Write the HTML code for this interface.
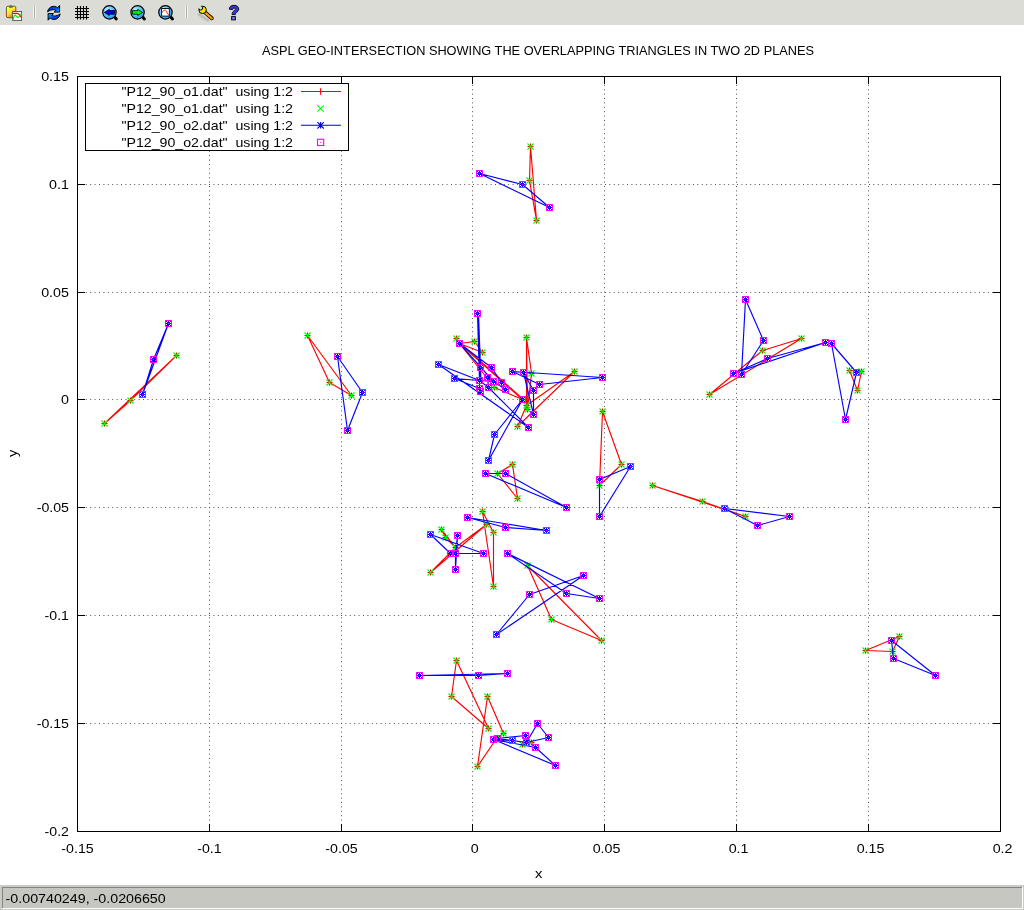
<!DOCTYPE html>
<html><head><meta charset="utf-8">
<style>
html,body{margin:0;padding:0;background:#fff;width:1024px;height:910px;overflow:hidden}
svg{display:block;position:absolute;left:0;top:0;will-change:transform}
text{font-family:"Liberation Sans",sans-serif;fill:#000}
</style></head><body>
<svg width="1024" height="910" viewBox="0 0 1024 910">
<defs>
<linearGradient id="clip" x1="0.2" y1="0.1" x2="0.8" y2="1"><stop offset="0" stop-color="#ffff50"/><stop offset="0.45" stop-color="#ffe030"/><stop offset="1" stop-color="#e85a00"/></linearGradient>
<radialGradient id="lens" cx="0.35" cy="0.3" r="0.8"><stop offset="0" stop-color="#b8ecff"/><stop offset="0.55" stop-color="#55bfff"/><stop offset="1" stop-color="#0a90f0"/></radialGradient>
<linearGradient id="ref" x1="0" y1="0" x2="1" y2="1"><stop offset="0" stop-color="#0020c0"/><stop offset="0.6" stop-color="#0050ff"/><stop offset="1" stop-color="#00b8ff"/></linearGradient>
<linearGradient id="ref2" x1="0" y1="0" x2="1" y2="1"><stop offset="0" stop-color="#00c8ff"/><stop offset="0.5" stop-color="#0050ff"/><stop offset="1" stop-color="#0020c0"/></linearGradient>
</defs>
<!-- toolbar -->
<rect x="0" y="0" width="1024" height="25" fill="#dcdcd6"/>
<!-- copy icon -->
<rect x="6.4" y="6.2" width="9.4" height="11.5" rx="1.6" fill="url(#clip)" stroke="#6a4a10" stroke-width="0.9"/>
<path d="M9.3 7.2 C9.3 5.2 12.3 5.2 12.3 7.2 Z" fill="#666" stroke="#444" stroke-width="0.6"/>
<rect x="9.3" y="6.6" width="3" height="1.2" fill="#777"/>
<rect x="12.6" y="11.5" width="9" height="8.9" fill="#fff" stroke="#505050" stroke-width="0.9"/>
<path d="M12.9 13.3 H17.3 C19 13.3 20 15.5 21.4 17.4" stroke="#f00" stroke-width="1.2" fill="none"/>
<path d="M12.9 20.2 C13.6 17 14 15.2 15 15.2 C16.2 15.2 16.5 17.4 17.8 17.4 C19.3 17.4 20.2 15 21.4 14.2" stroke="#0e0" stroke-width="1.2" fill="none"/>
<!-- separators -->
<linearGradient id="sepg" x1="0" y1="0" x2="0" y2="1"><stop offset="0" stop-color="#fff" stop-opacity="0"/><stop offset="0.25" stop-color="#fff" stop-opacity="1"/><stop offset="0.75" stop-color="#fff" stop-opacity="1"/><stop offset="1" stop-color="#fff" stop-opacity="0"/></linearGradient>
<mask id="sepm"><rect x="0" y="5" width="1024" height="14.5" fill="url(#sepg)"/></mask>
<g mask="url(#sepm)">
<rect x="33" y="5" width="1" height="14.5" fill="#f6f6f3"/><rect x="34" y="5" width="1" height="14.5" fill="#a9a9a4"/><rect x="35" y="5" width="1" height="14.5" fill="#f6f6f3"/>
<rect x="185" y="5" width="1" height="14.5" fill="#f6f6f3"/><rect x="186" y="5" width="1" height="14.5" fill="#a9a9a4"/><rect x="187" y="5" width="1" height="14.5" fill="#f6f6f3"/>
</g>
<!-- refresh -->
<path d="M47.5 11.8 C48.3 8.2 50.8 6.3 53.6 6.3 C55.3 6.3 56.6 6.9 57.5 7.8 L59.6 5.5 L59.6 12.1 L54.2 12.1 L55.9 10.3 C55.2 9.9 54.4 9.7 53.4 9.7 C51.2 9.7 49.5 10.5 47.5 11.8 Z" fill="url(#ref)" stroke="#000" stroke-width="1" stroke-linejoin="round"/>
<path d="M60.2 13.9 C59.4 17.5 56.9 19.4 54.1 19.4 C52.4 19.4 51.1 18.8 50.2 17.9 L48.1 20.2 L48.1 13.6 L53.5 13.6 L51.8 15.4 C52.5 15.8 53.3 16 54.3 16 C56.5 16 58.2 15.2 60.2 13.9 Z" fill="url(#ref2)" stroke="#000" stroke-width="1" stroke-linejoin="round"/>
<!-- grid icon -->
<path d="M77.5 6 V19.5 M80.5 6 V19.5 M83.5 6 V19.5 M86.5 6 V19.5 M75 8.5 H89 M75 11.5 H89 M75 14.5 H89 M75 17.5 H89" stroke="#000" stroke-width="1.1"/>
<!-- zoom prev -->
<path d="M114.8 17.3 L116.3 19" stroke="#000" stroke-width="3" stroke-linecap="round"/>
<circle cx="109.45" cy="12.35" r="6.7" fill="url(#lens)" stroke="#000" stroke-width="1.2"/>
<path d="M104.3 12.4 L109.3 9.3 V10.6 H114.6 V14.2 H109.3 V15.5 Z" fill="#0000f0" stroke="#000" stroke-width="0.8" stroke-linejoin="round"/>
<!-- zoom next -->
<path d="M142.9 17.3 L144.4 19" stroke="#000" stroke-width="3" stroke-linecap="round"/>
<circle cx="137.55" cy="12.35" r="6.7" fill="url(#lens)" stroke="#000" stroke-width="1.2"/>
<path d="M142.7 12.4 L137.7 9.3 V10.6 H132.4 V14.2 H137.7 V15.5 Z" fill="#00f000" stroke="#000" stroke-width="0.8" stroke-linejoin="round"/>
<!-- unzoom -->
<path d="M171 17.3 L172.5 19" stroke="#000" stroke-width="3" stroke-linecap="round"/>
<circle cx="165.45" cy="12.35" r="6.7" fill="url(#lens)" stroke="#000" stroke-width="1.2"/>
<rect x="161.6" y="8.5" width="7.7" height="7.6" fill="#fff" stroke="#000" stroke-width="0.9"/>
<path d="M162.1 12.6 C163 11.5 163.3 10 164.8 10 C166.2 10 166.6 11 167.2 13 C167.7 14.5 168.3 14.8 169 14.9" stroke="#f00" stroke-width="0.9" fill="none"/>
<!-- wrench -->
<path d="M199 14.5 L207.8 20.3" stroke="#9a9284" stroke-width="3" stroke-linecap="round" opacity="0.4"/>
<path d="M204.3 11.8 L211.8 18.3" stroke="#000" stroke-width="3.8" stroke-linecap="round"/>
<path d="M204.3 11.8 L211.8 18.3" stroke="#ff9a00" stroke-width="2.2" stroke-linecap="round"/>
<clipPath id="whc"><circle cx="202.6" cy="9.9" r="4.3"/></clipPath>
<circle cx="202.6" cy="9.9" r="3.7" fill="#f6e400" stroke="#000" stroke-width="1"/>
<circle cx="200.6" cy="7.9" r="2.1" fill="#dcdcd6" stroke="#000" stroke-width="1" clip-path="url(#whc)"/>
<path d="M200 8.5 L198 6.5 L201.2 5" fill="#dcdcd6" stroke="none"/>
<!-- help -->
<path d="M229.3 9.2 C229.3 6.6 231.3 5.3 234 5.3 C236.8 5.3 238.7 6.7 238.7 9.1 C238.7 11.1 237.3 11.9 236.2 12.6 C235.5 13.1 235.4 13.5 235.4 14.6 L232.1 14.6 C232.1 12.8 232.5 11.9 233.8 11 C234.8 10.3 235.3 9.9 235.3 9.2 C235.3 8.5 234.8 8.1 234.1 8.1 C233.2 8.1 232.7 8.6 232.7 9.6 Z" fill="#3535e8" stroke="#000" stroke-width="0.9" stroke-linejoin="round"/>
<rect x="231.6" y="16.6" width="3.8" height="3.3" fill="#6a6aec" stroke="#000" stroke-width="0.9"/>

<!-- status bar -->
<rect x="0" y="885" width="1024" height="25" fill="#c9cbc4"/>
<rect x="2" y="887" width="1021" height="22" fill="#c5c7c0"/>
<rect x="2" y="887" width="1020" height="1" fill="#83857f"/>
<rect x="2" y="887" width="1" height="21" fill="#83857f"/>
<rect x="2" y="908" width="1021" height="1" fill="#fdfdfc"/>
<rect x="1022" y="887" width="1" height="22" fill="#fdfdfc"/>

<!-- title -->
<text x="262" y="54.8" font-size="12.4" textLength="552" lengthAdjust="spacingAndGlyphs">ASPL GEO-INTERSECTION SHOWING THE OVERLAPPING TRIANGLES IN TWO 2D PLANES</text>

<path d="M209.5 76 V831 M341.5 76 V831 M472.5 76 V831 M604.5 76 V831 M736.5 76 V831 M868.5 76 V831 M77 184.5 H1000 M77 292.5 H1000 M77 399.5 H1000 M77 507.5 H1000 M77 615.5 H1000 M77 723.5 H1000" stroke="#555" stroke-width="1" stroke-dasharray="1 3.4" fill="none"/>
<rect x="77.5" y="76.5" width="923" height="755" fill="none" stroke="#000" stroke-width="1"/>
<path d="M209.5 832 V824 M209.5 76 V84 M341.5 832 V824 M341.5 76 V84 M472.5 832 V824 M472.5 76 V84 M604.5 832 V824 M604.5 76 V84 M736.5 832 V824 M736.5 76 V84 M868.5 832 V824 M868.5 76 V84 M77 184.5 H85 M1001 184.5 H993 M77 292.5 H85 M1001 292.5 H993 M77 399.5 H85 M1001 399.5 H993 M77 507.5 H85 M1001 507.5 H993 M77 615.5 H85 M1001 615.5 H993 M77 723.5 H85 M1001 723.5 H993" stroke="#000" stroke-width="1" fill="none"/>
<path d="M104.5 423.5 L130.5 400.5 L176.5 355.5 L104.5 423.5 M307.5 335.5 L329.5 382.5 L351.5 395.5 L307.5 335.5 M530.5 146.5 L529.5 180.5 L536.5 220.5 L530.5 146.5 M497.5 473.5 L512.5 464.5 L517.5 498.5 L497.5 473.5 M602.5 411.5 L621.5 464.5 L599.5 485.5 L602.5 411.5 M652.5 485.5 L702.5 501.5 L745.5 516.5 L652.5 485.5 M709.5 394.5 L762.5 350.5 L801.5 338.5 L709.5 394.5 M849.5 370.5 L857.5 390.5 L861.5 371.5 L849.5 370.5 M527.5 565.5 L551.5 619.5 L601.5 640.5 L527.5 565.5 M482.5 511.5 L493.5 532.5 L493.5 586.5 L482.5 511.5 M430.5 572.5 L455.5 547.5 L486.5 524.5 L430.5 572.5 M441.5 529.5 L445.5 537.5 L455.5 547.5 L441.5 529.5 M456.5 660.5 L451.5 696.5 L488.5 728.5 L456.5 660.5 M487.5 696.5 L503.5 733.5 L496.5 738.5 L477.5 766.5 L487.5 696.5 M522.5 744.5 L531.5 742.5 L522.5 744.5 M865.5 650.5 L899.5 636.5 L892.5 651.5 L865.5 650.5 M459.5 343.5 L474.5 341.5 L482.5 352.5 L459.5 343.5 M459.5 343.5 L494.5 387.5 L522.5 399.5 L459.5 343.5 M526.5 337.5 L531.5 373.5 L527.5 409.5 L526.5 337.5 M526.5 337.5 L526.5 405.5 M574.5 371.5 L517.5 426.5 L526.5 405.5 L574.5 371.5 M460.5 343.4 L523.4 399.4" stroke="#f00" stroke-width="1.15" fill="none" stroke-linejoin="round"/>
<path d="M101.5 423.5 h6.0 M104.5 420.5 v6.0 M127.5 400.5 h6.0 M130.5 397.5 v6.0 M173.5 355.5 h6.0 M176.5 352.5 v6.0 M304.5 335.5 h6.0 M307.5 332.5 v6.0 M326.5 382.5 h6.0 M329.5 379.5 v6.0 M348.5 395.5 h6.0 M351.5 392.5 v6.0 M527.5 146.5 h6.0 M530.5 143.5 v6.0 M526.5 180.5 h6.0 M529.5 177.5 v6.0 M533.5 220.5 h6.0 M536.5 217.5 v6.0 M494.5 473.5 h6.0 M497.5 470.5 v6.0 M509.5 464.5 h6.0 M512.5 461.5 v6.0 M514.5 498.5 h6.0 M517.5 495.5 v6.0 M599.5 411.5 h6.0 M602.5 408.5 v6.0 M618.5 464.5 h6.0 M621.5 461.5 v6.0 M596.5 485.5 h6.0 M599.5 482.5 v6.0 M649.5 485.5 h6.0 M652.5 482.5 v6.0 M699.5 501.5 h6.0 M702.5 498.5 v6.0 M742.5 516.5 h6.0 M745.5 513.5 v6.0 M706.5 394.5 h6.0 M709.5 391.5 v6.0 M759.5 350.5 h6.0 M762.5 347.5 v6.0 M798.5 338.5 h6.0 M801.5 335.5 v6.0 M846.5 370.5 h6.0 M849.5 367.5 v6.0 M854.5 390.5 h6.0 M857.5 387.5 v6.0 M858.5 371.5 h6.0 M861.5 368.5 v6.0 M524.5 565.5 h6.0 M527.5 562.5 v6.0 M548.5 619.5 h6.0 M551.5 616.5 v6.0 M598.5 640.5 h6.0 M601.5 637.5 v6.0 M479.5 511.5 h6.0 M482.5 508.5 v6.0 M490.5 532.5 h6.0 M493.5 529.5 v6.0 M490.5 586.5 h6.0 M493.5 583.5 v6.0 M427.5 572.5 h6.0 M430.5 569.5 v6.0 M452.5 547.5 h6.0 M455.5 544.5 v6.0 M483.5 524.5 h6.0 M486.5 521.5 v6.0 M438.5 529.5 h6.0 M441.5 526.5 v6.0 M442.5 537.5 h6.0 M445.5 534.5 v6.0 M453.5 660.5 h6.0 M456.5 657.5 v6.0 M448.5 696.5 h6.0 M451.5 693.5 v6.0 M485.5 728.5 h6.0 M488.5 725.5 v6.0 M484.5 696.5 h6.0 M487.5 693.5 v6.0 M500.5 733.5 h6.0 M503.5 730.5 v6.0 M493.5 738.5 h6.0 M496.5 735.5 v6.0 M474.5 766.5 h6.0 M477.5 763.5 v6.0 M519.5 744.5 h6.0 M522.5 741.5 v6.0 M528.5 742.5 h6.0 M531.5 739.5 v6.0 M862.5 650.5 h6.0 M865.5 647.5 v6.0 M896.5 636.5 h6.0 M899.5 633.5 v6.0 M889.5 651.5 h6.0 M892.5 648.5 v6.0 M456.5 343.5 h6.0 M459.5 340.5 v6.0 M471.5 341.5 h6.0 M474.5 338.5 v6.0 M479.5 352.5 h6.0 M482.5 349.5 v6.0 M491.5 387.5 h6.0 M494.5 384.5 v6.0 M519.5 399.5 h6.0 M522.5 396.5 v6.0 M523.5 337.5 h6.0 M526.5 334.5 v6.0 M528.5 373.5 h6.0 M531.5 370.5 v6.0 M524.5 409.5 h6.0 M527.5 406.5 v6.0 M523.5 405.5 h6.0 M526.5 402.5 v6.0 M571.5 371.5 h6.0 M574.5 368.5 v6.0 M514.5 426.5 h6.0 M517.5 423.5 v6.0 M453.5 338.5 h6.0 M456.5 335.5 v6.0" stroke="#f00" stroke-width="1.1" fill="none"/>
<path d="M101.5 420.5 l6.0 6.0 M101.5 426.5 l6.0 -6.0 M127.5 397.5 l6.0 6.0 M127.5 403.5 l6.0 -6.0 M173.5 352.5 l6.0 6.0 M173.5 358.5 l6.0 -6.0 M304.5 332.5 l6.0 6.0 M304.5 338.5 l6.0 -6.0 M326.5 379.5 l6.0 6.0 M326.5 385.5 l6.0 -6.0 M348.5 392.5 l6.0 6.0 M348.5 398.5 l6.0 -6.0 M527.5 143.5 l6.0 6.0 M527.5 149.5 l6.0 -6.0 M526.5 177.5 l6.0 6.0 M526.5 183.5 l6.0 -6.0 M533.5 217.5 l6.0 6.0 M533.5 223.5 l6.0 -6.0 M494.5 470.5 l6.0 6.0 M494.5 476.5 l6.0 -6.0 M509.5 461.5 l6.0 6.0 M509.5 467.5 l6.0 -6.0 M514.5 495.5 l6.0 6.0 M514.5 501.5 l6.0 -6.0 M599.5 408.5 l6.0 6.0 M599.5 414.5 l6.0 -6.0 M618.5 461.5 l6.0 6.0 M618.5 467.5 l6.0 -6.0 M596.5 482.5 l6.0 6.0 M596.5 488.5 l6.0 -6.0 M649.5 482.5 l6.0 6.0 M649.5 488.5 l6.0 -6.0 M699.5 498.5 l6.0 6.0 M699.5 504.5 l6.0 -6.0 M742.5 513.5 l6.0 6.0 M742.5 519.5 l6.0 -6.0 M706.5 391.5 l6.0 6.0 M706.5 397.5 l6.0 -6.0 M759.5 347.5 l6.0 6.0 M759.5 353.5 l6.0 -6.0 M798.5 335.5 l6.0 6.0 M798.5 341.5 l6.0 -6.0 M846.5 367.5 l6.0 6.0 M846.5 373.5 l6.0 -6.0 M854.5 387.5 l6.0 6.0 M854.5 393.5 l6.0 -6.0 M858.5 368.5 l6.0 6.0 M858.5 374.5 l6.0 -6.0 M524.5 562.5 l6.0 6.0 M524.5 568.5 l6.0 -6.0 M548.5 616.5 l6.0 6.0 M548.5 622.5 l6.0 -6.0 M598.5 637.5 l6.0 6.0 M598.5 643.5 l6.0 -6.0 M479.5 508.5 l6.0 6.0 M479.5 514.5 l6.0 -6.0 M490.5 529.5 l6.0 6.0 M490.5 535.5 l6.0 -6.0 M490.5 583.5 l6.0 6.0 M490.5 589.5 l6.0 -6.0 M427.5 569.5 l6.0 6.0 M427.5 575.5 l6.0 -6.0 M452.5 544.5 l6.0 6.0 M452.5 550.5 l6.0 -6.0 M483.5 521.5 l6.0 6.0 M483.5 527.5 l6.0 -6.0 M438.5 526.5 l6.0 6.0 M438.5 532.5 l6.0 -6.0 M442.5 534.5 l6.0 6.0 M442.5 540.5 l6.0 -6.0 M453.5 657.5 l6.0 6.0 M453.5 663.5 l6.0 -6.0 M448.5 693.5 l6.0 6.0 M448.5 699.5 l6.0 -6.0 M485.5 725.5 l6.0 6.0 M485.5 731.5 l6.0 -6.0 M484.5 693.5 l6.0 6.0 M484.5 699.5 l6.0 -6.0 M500.5 730.5 l6.0 6.0 M500.5 736.5 l6.0 -6.0 M493.5 735.5 l6.0 6.0 M493.5 741.5 l6.0 -6.0 M474.5 763.5 l6.0 6.0 M474.5 769.5 l6.0 -6.0 M519.5 741.5 l6.0 6.0 M519.5 747.5 l6.0 -6.0 M528.5 739.5 l6.0 6.0 M528.5 745.5 l6.0 -6.0 M862.5 647.5 l6.0 6.0 M862.5 653.5 l6.0 -6.0 M896.5 633.5 l6.0 6.0 M896.5 639.5 l6.0 -6.0 M889.5 648.5 l6.0 6.0 M889.5 654.5 l6.0 -6.0 M456.5 340.5 l6.0 6.0 M456.5 346.5 l6.0 -6.0 M471.5 338.5 l6.0 6.0 M471.5 344.5 l6.0 -6.0 M479.5 349.5 l6.0 6.0 M479.5 355.5 l6.0 -6.0 M491.5 384.5 l6.0 6.0 M491.5 390.5 l6.0 -6.0 M519.5 396.5 l6.0 6.0 M519.5 402.5 l6.0 -6.0 M523.5 334.5 l6.0 6.0 M523.5 340.5 l6.0 -6.0 M528.5 370.5 l6.0 6.0 M528.5 376.5 l6.0 -6.0 M524.5 406.5 l6.0 6.0 M524.5 412.5 l6.0 -6.0 M523.5 402.5 l6.0 6.0 M523.5 408.5 l6.0 -6.0 M571.5 368.5 l6.0 6.0 M571.5 374.5 l6.0 -6.0 M514.5 423.5 l6.0 6.0 M514.5 429.5 l6.0 -6.0 M453.5 335.5 l6.0 6.0 M453.5 341.5 l6.0 -6.0" stroke="#0f0" stroke-width="1.15" fill="none"/>
<path d="M168.5 323.5 L153.5 359.5 L142.5 394.5 L168.5 323.5 M337.5 356.5 L362.5 392.5 L347.5 430.5 L337.5 356.5 M479.5 173.5 L522.5 184.5 L549.5 207.5 L479.5 173.5 M522.5 399.5 L494.5 434.5 L488.5 460.5 L522.5 399.5 M485.5 473.5 L505.5 473.5 L566.5 507.5 L485.5 473.5 M599.5 479.5 L630.5 466.5 L599.5 516.5 L599.5 479.5 M724.5 508.5 L789.5 516.5 L757.5 525.5 L724.5 508.5 M745.5 299.5 L763.5 340.5 L741.5 374.5 L745.5 299.5 M733.5 373.5 L767.5 358.5 L825.5 342.5 L733.5 373.5 M831.5 343.5 L856.5 372.5 L845.5 419.5 L831.5 343.5 M507.5 553.5 L566.5 593.5 L599.5 598.5 L507.5 553.5 M529.5 594.5 L583.5 575.5 L496.5 634.5 L529.5 594.5 M467.5 517.5 L505.5 527.5 L546.5 530.5 L467.5 517.5 M430.5 534.5 L450.5 553.5 L483.5 553.5 L430.5 534.5 M457.5 535.5 L455.5 553.5 L455.5 569.5 L457.5 535.5 M419.5 675.5 L478.5 675.5 L507.5 673.5 L419.5 675.5 M537.5 723.5 L548.5 737.5 L526.5 742.5 L537.5 723.5 M497.5 738.5 L525.5 735.5 L526.5 742.5 L497.5 738.5 M493.5 739.5 L512.5 740.5 L526.5 742.5 M493.5 739.5 L535.5 747.5 L555.5 765.5 L493.5 739.5 M891.5 640.5 L893.5 658.5 L935.5 675.5 L891.5 640.5 M477.5 313.5 L480.5 367.5 L479.5 380.5 L477.5 313.5 M479.5 380.5 L479.5 388.5 L480.5 391.5 M459.5 343.5 L491.5 367.5 L501.5 382.5 M459.5 343.5 L493.5 381.5 M438.5 364.5 L479.5 380.5 M438.5 364.5 L528.5 427.5 M454.5 378.5 L479.5 380.5 M454.5 378.5 L479.5 388.5 M487.5 377.5 L488.5 387.5 L528.5 427.5 M479.5 380.5 L488.5 387.5 M479.5 380.5 L493.5 381.5 M493.5 381.5 L505.5 389.5 M487.5 377.5 L505.5 389.5 M512.5 371.5 L602.5 377.5 L539.5 384.5 L512.5 371.5 M512.5 371.5 L523.5 372.5 M523.5 372.5 L533.5 390.5 L533.5 414.5 L523.5 372.5 M478.6 316.0 L480.9 380.0" stroke="#00f" stroke-width="1.15" fill="none" stroke-linejoin="round"/>
<path d="M165.5 323.5 h6.0 M168.5 320.5 v6.0 M165.5 320.5 l6.0 6.0 M165.5 326.5 l6.0 -6.0 M150.5 359.5 h6.0 M153.5 356.5 v6.0 M150.5 356.5 l6.0 6.0 M150.5 362.5 l6.0 -6.0 M139.5 394.5 h6.0 M142.5 391.5 v6.0 M139.5 391.5 l6.0 6.0 M139.5 397.5 l6.0 -6.0 M334.5 356.5 h6.0 M337.5 353.5 v6.0 M334.5 353.5 l6.0 6.0 M334.5 359.5 l6.0 -6.0 M359.5 392.5 h6.0 M362.5 389.5 v6.0 M359.5 389.5 l6.0 6.0 M359.5 395.5 l6.0 -6.0 M344.5 430.5 h6.0 M347.5 427.5 v6.0 M344.5 427.5 l6.0 6.0 M344.5 433.5 l6.0 -6.0 M476.5 173.5 h6.0 M479.5 170.5 v6.0 M476.5 170.5 l6.0 6.0 M476.5 176.5 l6.0 -6.0 M519.5 184.5 h6.0 M522.5 181.5 v6.0 M519.5 181.5 l6.0 6.0 M519.5 187.5 l6.0 -6.0 M546.5 207.5 h6.0 M549.5 204.5 v6.0 M546.5 204.5 l6.0 6.0 M546.5 210.5 l6.0 -6.0 M519.5 399.5 h6.0 M522.5 396.5 v6.0 M519.5 396.5 l6.0 6.0 M519.5 402.5 l6.0 -6.0 M491.5 434.5 h6.0 M494.5 431.5 v6.0 M491.5 431.5 l6.0 6.0 M491.5 437.5 l6.0 -6.0 M485.5 460.5 h6.0 M488.5 457.5 v6.0 M485.5 457.5 l6.0 6.0 M485.5 463.5 l6.0 -6.0 M482.5 473.5 h6.0 M485.5 470.5 v6.0 M482.5 470.5 l6.0 6.0 M482.5 476.5 l6.0 -6.0 M502.5 473.5 h6.0 M505.5 470.5 v6.0 M502.5 470.5 l6.0 6.0 M502.5 476.5 l6.0 -6.0 M563.5 507.5 h6.0 M566.5 504.5 v6.0 M563.5 504.5 l6.0 6.0 M563.5 510.5 l6.0 -6.0 M596.5 479.5 h6.0 M599.5 476.5 v6.0 M596.5 476.5 l6.0 6.0 M596.5 482.5 l6.0 -6.0 M627.5 466.5 h6.0 M630.5 463.5 v6.0 M627.5 463.5 l6.0 6.0 M627.5 469.5 l6.0 -6.0 M596.5 516.5 h6.0 M599.5 513.5 v6.0 M596.5 513.5 l6.0 6.0 M596.5 519.5 l6.0 -6.0 M721.5 508.5 h6.0 M724.5 505.5 v6.0 M721.5 505.5 l6.0 6.0 M721.5 511.5 l6.0 -6.0 M786.5 516.5 h6.0 M789.5 513.5 v6.0 M786.5 513.5 l6.0 6.0 M786.5 519.5 l6.0 -6.0 M754.5 525.5 h6.0 M757.5 522.5 v6.0 M754.5 522.5 l6.0 6.0 M754.5 528.5 l6.0 -6.0 M742.5 299.5 h6.0 M745.5 296.5 v6.0 M742.5 296.5 l6.0 6.0 M742.5 302.5 l6.0 -6.0 M760.5 340.5 h6.0 M763.5 337.5 v6.0 M760.5 337.5 l6.0 6.0 M760.5 343.5 l6.0 -6.0 M738.5 374.5 h6.0 M741.5 371.5 v6.0 M738.5 371.5 l6.0 6.0 M738.5 377.5 l6.0 -6.0 M730.5 373.5 h6.0 M733.5 370.5 v6.0 M730.5 370.5 l6.0 6.0 M730.5 376.5 l6.0 -6.0 M764.5 358.5 h6.0 M767.5 355.5 v6.0 M764.5 355.5 l6.0 6.0 M764.5 361.5 l6.0 -6.0 M822.5 342.5 h6.0 M825.5 339.5 v6.0 M822.5 339.5 l6.0 6.0 M822.5 345.5 l6.0 -6.0 M828.5 343.5 h6.0 M831.5 340.5 v6.0 M828.5 340.5 l6.0 6.0 M828.5 346.5 l6.0 -6.0 M853.5 372.5 h6.0 M856.5 369.5 v6.0 M853.5 369.5 l6.0 6.0 M853.5 375.5 l6.0 -6.0 M842.5 419.5 h6.0 M845.5 416.5 v6.0 M842.5 416.5 l6.0 6.0 M842.5 422.5 l6.0 -6.0 M504.5 553.5 h6.0 M507.5 550.5 v6.0 M504.5 550.5 l6.0 6.0 M504.5 556.5 l6.0 -6.0 M563.5 593.5 h6.0 M566.5 590.5 v6.0 M563.5 590.5 l6.0 6.0 M563.5 596.5 l6.0 -6.0 M596.5 598.5 h6.0 M599.5 595.5 v6.0 M596.5 595.5 l6.0 6.0 M596.5 601.5 l6.0 -6.0 M526.5 594.5 h6.0 M529.5 591.5 v6.0 M526.5 591.5 l6.0 6.0 M526.5 597.5 l6.0 -6.0 M580.5 575.5 h6.0 M583.5 572.5 v6.0 M580.5 572.5 l6.0 6.0 M580.5 578.5 l6.0 -6.0 M493.5 634.5 h6.0 M496.5 631.5 v6.0 M493.5 631.5 l6.0 6.0 M493.5 637.5 l6.0 -6.0 M464.5 517.5 h6.0 M467.5 514.5 v6.0 M464.5 514.5 l6.0 6.0 M464.5 520.5 l6.0 -6.0 M502.5 527.5 h6.0 M505.5 524.5 v6.0 M502.5 524.5 l6.0 6.0 M502.5 530.5 l6.0 -6.0 M543.5 530.5 h6.0 M546.5 527.5 v6.0 M543.5 527.5 l6.0 6.0 M543.5 533.5 l6.0 -6.0 M427.5 534.5 h6.0 M430.5 531.5 v6.0 M427.5 531.5 l6.0 6.0 M427.5 537.5 l6.0 -6.0 M447.5 553.5 h6.0 M450.5 550.5 v6.0 M447.5 550.5 l6.0 6.0 M447.5 556.5 l6.0 -6.0 M480.5 553.5 h6.0 M483.5 550.5 v6.0 M480.5 550.5 l6.0 6.0 M480.5 556.5 l6.0 -6.0 M454.5 535.5 h6.0 M457.5 532.5 v6.0 M454.5 532.5 l6.0 6.0 M454.5 538.5 l6.0 -6.0 M452.5 553.5 h6.0 M455.5 550.5 v6.0 M452.5 550.5 l6.0 6.0 M452.5 556.5 l6.0 -6.0 M452.5 569.5 h6.0 M455.5 566.5 v6.0 M452.5 566.5 l6.0 6.0 M452.5 572.5 l6.0 -6.0 M416.5 675.5 h6.0 M419.5 672.5 v6.0 M416.5 672.5 l6.0 6.0 M416.5 678.5 l6.0 -6.0 M475.5 675.5 h6.0 M478.5 672.5 v6.0 M475.5 672.5 l6.0 6.0 M475.5 678.5 l6.0 -6.0 M504.5 673.5 h6.0 M507.5 670.5 v6.0 M504.5 670.5 l6.0 6.0 M504.5 676.5 l6.0 -6.0 M534.5 723.5 h6.0 M537.5 720.5 v6.0 M534.5 720.5 l6.0 6.0 M534.5 726.5 l6.0 -6.0 M545.5 737.5 h6.0 M548.5 734.5 v6.0 M545.5 734.5 l6.0 6.0 M545.5 740.5 l6.0 -6.0 M523.5 742.5 h6.0 M526.5 739.5 v6.0 M523.5 739.5 l6.0 6.0 M523.5 745.5 l6.0 -6.0 M494.5 738.5 h6.0 M497.5 735.5 v6.0 M494.5 735.5 l6.0 6.0 M494.5 741.5 l6.0 -6.0 M522.5 735.5 h6.0 M525.5 732.5 v6.0 M522.5 732.5 l6.0 6.0 M522.5 738.5 l6.0 -6.0 M490.5 739.5 h6.0 M493.5 736.5 v6.0 M490.5 736.5 l6.0 6.0 M490.5 742.5 l6.0 -6.0 M509.5 740.5 h6.0 M512.5 737.5 v6.0 M509.5 737.5 l6.0 6.0 M509.5 743.5 l6.0 -6.0 M532.5 747.5 h6.0 M535.5 744.5 v6.0 M532.5 744.5 l6.0 6.0 M532.5 750.5 l6.0 -6.0 M552.5 765.5 h6.0 M555.5 762.5 v6.0 M552.5 762.5 l6.0 6.0 M552.5 768.5 l6.0 -6.0 M888.5 640.5 h6.0 M891.5 637.5 v6.0 M888.5 637.5 l6.0 6.0 M888.5 643.5 l6.0 -6.0 M890.5 658.5 h6.0 M893.5 655.5 v6.0 M890.5 655.5 l6.0 6.0 M890.5 661.5 l6.0 -6.0 M932.5 675.5 h6.0 M935.5 672.5 v6.0 M932.5 672.5 l6.0 6.0 M932.5 678.5 l6.0 -6.0 M474.5 313.5 h6.0 M477.5 310.5 v6.0 M474.5 310.5 l6.0 6.0 M474.5 316.5 l6.0 -6.0 M477.5 367.5 h6.0 M480.5 364.5 v6.0 M477.5 364.5 l6.0 6.0 M477.5 370.5 l6.0 -6.0 M476.5 380.5 h6.0 M479.5 377.5 v6.0 M476.5 377.5 l6.0 6.0 M476.5 383.5 l6.0 -6.0 M476.5 388.5 h6.0 M479.5 385.5 v6.0 M476.5 385.5 l6.0 6.0 M476.5 391.5 l6.0 -6.0 M477.5 391.5 h6.0 M480.5 388.5 v6.0 M477.5 388.5 l6.0 6.0 M477.5 394.5 l6.0 -6.0 M456.5 343.5 h6.0 M459.5 340.5 v6.0 M456.5 340.5 l6.0 6.0 M456.5 346.5 l6.0 -6.0 M488.5 367.5 h6.0 M491.5 364.5 v6.0 M488.5 364.5 l6.0 6.0 M488.5 370.5 l6.0 -6.0 M498.5 382.5 h6.0 M501.5 379.5 v6.0 M498.5 379.5 l6.0 6.0 M498.5 385.5 l6.0 -6.0 M490.5 381.5 h6.0 M493.5 378.5 v6.0 M490.5 378.5 l6.0 6.0 M490.5 384.5 l6.0 -6.0 M435.5 364.5 h6.0 M438.5 361.5 v6.0 M435.5 361.5 l6.0 6.0 M435.5 367.5 l6.0 -6.0 M525.5 427.5 h6.0 M528.5 424.5 v6.0 M525.5 424.5 l6.0 6.0 M525.5 430.5 l6.0 -6.0 M451.5 378.5 h6.0 M454.5 375.5 v6.0 M451.5 375.5 l6.0 6.0 M451.5 381.5 l6.0 -6.0 M484.5 377.5 h6.0 M487.5 374.5 v6.0 M484.5 374.5 l6.0 6.0 M484.5 380.5 l6.0 -6.0 M485.5 387.5 h6.0 M488.5 384.5 v6.0 M485.5 384.5 l6.0 6.0 M485.5 390.5 l6.0 -6.0 M502.5 389.5 h6.0 M505.5 386.5 v6.0 M502.5 386.5 l6.0 6.0 M502.5 392.5 l6.0 -6.0 M509.5 371.5 h6.0 M512.5 368.5 v6.0 M509.5 368.5 l6.0 6.0 M509.5 374.5 l6.0 -6.0 M599.5 377.5 h6.0 M602.5 374.5 v6.0 M599.5 374.5 l6.0 6.0 M599.5 380.5 l6.0 -6.0 M536.5 384.5 h6.0 M539.5 381.5 v6.0 M536.5 381.5 l6.0 6.0 M536.5 387.5 l6.0 -6.0 M520.5 372.5 h6.0 M523.5 369.5 v6.0 M520.5 369.5 l6.0 6.0 M520.5 375.5 l6.0 -6.0 M530.5 390.5 h6.0 M533.5 387.5 v6.0 M530.5 387.5 l6.0 6.0 M530.5 393.5 l6.0 -6.0 M530.5 414.5 h6.0 M533.5 411.5 v6.0 M530.5 411.5 l6.0 6.0 M530.5 417.5 l6.0 -6.0" stroke="#00f" stroke-width="1" fill="none"/>
<path d="M165.5 320.5 h6.0 v6.0 h-6.0 Z M150.5 356.5 h6.0 v6.0 h-6.0 Z M139.5 391.5 h6.0 v6.0 h-6.0 Z M334.5 353.5 h6.0 v6.0 h-6.0 Z M359.5 389.5 h6.0 v6.0 h-6.0 Z M344.5 427.5 h6.0 v6.0 h-6.0 Z M476.5 170.5 h6.0 v6.0 h-6.0 Z M519.5 181.5 h6.0 v6.0 h-6.0 Z M546.5 204.5 h6.0 v6.0 h-6.0 Z M519.5 396.5 h6.0 v6.0 h-6.0 Z M491.5 431.5 h6.0 v6.0 h-6.0 Z M485.5 457.5 h6.0 v6.0 h-6.0 Z M482.5 470.5 h6.0 v6.0 h-6.0 Z M502.5 470.5 h6.0 v6.0 h-6.0 Z M563.5 504.5 h6.0 v6.0 h-6.0 Z M596.5 476.5 h6.0 v6.0 h-6.0 Z M627.5 463.5 h6.0 v6.0 h-6.0 Z M596.5 513.5 h6.0 v6.0 h-6.0 Z M721.5 505.5 h6.0 v6.0 h-6.0 Z M786.5 513.5 h6.0 v6.0 h-6.0 Z M754.5 522.5 h6.0 v6.0 h-6.0 Z M742.5 296.5 h6.0 v6.0 h-6.0 Z M760.5 337.5 h6.0 v6.0 h-6.0 Z M738.5 371.5 h6.0 v6.0 h-6.0 Z M730.5 370.5 h6.0 v6.0 h-6.0 Z M764.5 355.5 h6.0 v6.0 h-6.0 Z M822.5 339.5 h6.0 v6.0 h-6.0 Z M828.5 340.5 h6.0 v6.0 h-6.0 Z M853.5 369.5 h6.0 v6.0 h-6.0 Z M842.5 416.5 h6.0 v6.0 h-6.0 Z M504.5 550.5 h6.0 v6.0 h-6.0 Z M563.5 590.5 h6.0 v6.0 h-6.0 Z M596.5 595.5 h6.0 v6.0 h-6.0 Z M526.5 591.5 h6.0 v6.0 h-6.0 Z M580.5 572.5 h6.0 v6.0 h-6.0 Z M493.5 631.5 h6.0 v6.0 h-6.0 Z M464.5 514.5 h6.0 v6.0 h-6.0 Z M502.5 524.5 h6.0 v6.0 h-6.0 Z M543.5 527.5 h6.0 v6.0 h-6.0 Z M427.5 531.5 h6.0 v6.0 h-6.0 Z M447.5 550.5 h6.0 v6.0 h-6.0 Z M480.5 550.5 h6.0 v6.0 h-6.0 Z M454.5 532.5 h6.0 v6.0 h-6.0 Z M452.5 550.5 h6.0 v6.0 h-6.0 Z M452.5 566.5 h6.0 v6.0 h-6.0 Z M416.5 672.5 h6.0 v6.0 h-6.0 Z M475.5 672.5 h6.0 v6.0 h-6.0 Z M504.5 670.5 h6.0 v6.0 h-6.0 Z M534.5 720.5 h6.0 v6.0 h-6.0 Z M545.5 734.5 h6.0 v6.0 h-6.0 Z M523.5 739.5 h6.0 v6.0 h-6.0 Z M494.5 735.5 h6.0 v6.0 h-6.0 Z M522.5 732.5 h6.0 v6.0 h-6.0 Z M490.5 736.5 h6.0 v6.0 h-6.0 Z M509.5 737.5 h6.0 v6.0 h-6.0 Z M532.5 744.5 h6.0 v6.0 h-6.0 Z M552.5 762.5 h6.0 v6.0 h-6.0 Z M888.5 637.5 h6.0 v6.0 h-6.0 Z M890.5 655.5 h6.0 v6.0 h-6.0 Z M932.5 672.5 h6.0 v6.0 h-6.0 Z M474.5 310.5 h6.0 v6.0 h-6.0 Z M477.5 364.5 h6.0 v6.0 h-6.0 Z M476.5 377.5 h6.0 v6.0 h-6.0 Z M476.5 385.5 h6.0 v6.0 h-6.0 Z M477.5 388.5 h6.0 v6.0 h-6.0 Z M456.5 340.5 h6.0 v6.0 h-6.0 Z M488.5 364.5 h6.0 v6.0 h-6.0 Z M498.5 379.5 h6.0 v6.0 h-6.0 Z M490.5 378.5 h6.0 v6.0 h-6.0 Z M435.5 361.5 h6.0 v6.0 h-6.0 Z M525.5 424.5 h6.0 v6.0 h-6.0 Z M451.5 375.5 h6.0 v6.0 h-6.0 Z M484.5 374.5 h6.0 v6.0 h-6.0 Z M485.5 384.5 h6.0 v6.0 h-6.0 Z M502.5 386.5 h6.0 v6.0 h-6.0 Z M509.5 368.5 h6.0 v6.0 h-6.0 Z M599.5 374.5 h6.0 v6.0 h-6.0 Z M536.5 381.5 h6.0 v6.0 h-6.0 Z M520.5 369.5 h6.0 v6.0 h-6.0 Z M530.5 387.5 h6.0 v6.0 h-6.0 Z M530.5 411.5 h6.0 v6.0 h-6.0 Z" stroke="#f0f" stroke-width="1" fill="none"/>
<path d="M168.0 323.0 h1 v1 h-1Z M153.0 359.0 h1 v1 h-1Z M142.0 394.0 h1 v1 h-1Z M337.0 356.0 h1 v1 h-1Z M362.0 392.0 h1 v1 h-1Z M347.0 430.0 h1 v1 h-1Z M479.0 173.0 h1 v1 h-1Z M522.0 184.0 h1 v1 h-1Z M549.0 207.0 h1 v1 h-1Z M522.0 399.0 h1 v1 h-1Z M494.0 434.0 h1 v1 h-1Z M488.0 460.0 h1 v1 h-1Z M485.0 473.0 h1 v1 h-1Z M505.0 473.0 h1 v1 h-1Z M566.0 507.0 h1 v1 h-1Z M599.0 479.0 h1 v1 h-1Z M630.0 466.0 h1 v1 h-1Z M599.0 516.0 h1 v1 h-1Z M724.0 508.0 h1 v1 h-1Z M789.0 516.0 h1 v1 h-1Z M757.0 525.0 h1 v1 h-1Z M745.0 299.0 h1 v1 h-1Z M763.0 340.0 h1 v1 h-1Z M741.0 374.0 h1 v1 h-1Z M733.0 373.0 h1 v1 h-1Z M767.0 358.0 h1 v1 h-1Z M825.0 342.0 h1 v1 h-1Z M831.0 343.0 h1 v1 h-1Z M856.0 372.0 h1 v1 h-1Z M845.0 419.0 h1 v1 h-1Z M507.0 553.0 h1 v1 h-1Z M566.0 593.0 h1 v1 h-1Z M599.0 598.0 h1 v1 h-1Z M529.0 594.0 h1 v1 h-1Z M583.0 575.0 h1 v1 h-1Z M496.0 634.0 h1 v1 h-1Z M467.0 517.0 h1 v1 h-1Z M505.0 527.0 h1 v1 h-1Z M546.0 530.0 h1 v1 h-1Z M430.0 534.0 h1 v1 h-1Z M450.0 553.0 h1 v1 h-1Z M483.0 553.0 h1 v1 h-1Z M457.0 535.0 h1 v1 h-1Z M455.0 553.0 h1 v1 h-1Z M455.0 569.0 h1 v1 h-1Z M419.0 675.0 h1 v1 h-1Z M478.0 675.0 h1 v1 h-1Z M507.0 673.0 h1 v1 h-1Z M537.0 723.0 h1 v1 h-1Z M548.0 737.0 h1 v1 h-1Z M526.0 742.0 h1 v1 h-1Z M497.0 738.0 h1 v1 h-1Z M525.0 735.0 h1 v1 h-1Z M493.0 739.0 h1 v1 h-1Z M512.0 740.0 h1 v1 h-1Z M535.0 747.0 h1 v1 h-1Z M555.0 765.0 h1 v1 h-1Z M891.0 640.0 h1 v1 h-1Z M893.0 658.0 h1 v1 h-1Z M935.0 675.0 h1 v1 h-1Z M477.0 313.0 h1 v1 h-1Z M480.0 367.0 h1 v1 h-1Z M479.0 380.0 h1 v1 h-1Z M479.0 388.0 h1 v1 h-1Z M480.0 391.0 h1 v1 h-1Z M459.0 343.0 h1 v1 h-1Z M491.0 367.0 h1 v1 h-1Z M501.0 382.0 h1 v1 h-1Z M493.0 381.0 h1 v1 h-1Z M438.0 364.0 h1 v1 h-1Z M528.0 427.0 h1 v1 h-1Z M454.0 378.0 h1 v1 h-1Z M487.0 377.0 h1 v1 h-1Z M488.0 387.0 h1 v1 h-1Z M505.0 389.0 h1 v1 h-1Z M512.0 371.0 h1 v1 h-1Z M602.0 377.0 h1 v1 h-1Z M539.0 384.0 h1 v1 h-1Z M523.0 372.0 h1 v1 h-1Z M533.0 390.0 h1 v1 h-1Z M533.0 414.0 h1 v1 h-1Z" fill="#f0f"/>

<!-- legend -->
<rect x="85.5" y="83.5" width="263" height="67" fill="#fff" stroke="#000" stroke-width="1"/>
<path d="M301 91.5 H341 M320.6 88.3 V94.7" stroke="#f00" stroke-width="1.1"/>
<path d="M317.4 105.3 l6.4 6.4 M317.4 111.7 l6.4 -6.4" stroke="#0f0" stroke-width="1.1"/>
<path d="M301 125.3 H341 M320.6 122.1 V128.5 M317.4 122.1 l6.4 6.4 M317.4 128.5 l6.4 -6.4" stroke="#00f" stroke-width="1.1"/>
<rect x="317.5" y="139.3" width="6.2" height="6.2" fill="none" stroke="#f0f" stroke-width="1.1"/>
<rect x="320.1" y="141.9" width="1" height="1" fill="#f0f"/>
<text x="69.00" y="81.10" font-size="12.80" text-anchor="end" textLength="27.83" lengthAdjust="spacingAndGlyphs" style="white-space:pre">0.15</text>
<text x="69.00" y="189.10" font-size="12.80" text-anchor="end" textLength="19.88" lengthAdjust="spacingAndGlyphs" style="white-space:pre">0.1</text>
<text x="69.00" y="297.10" font-size="12.80" text-anchor="end" textLength="27.83" lengthAdjust="spacingAndGlyphs" style="white-space:pre">0.05</text>
<text x="69.00" y="404.10" font-size="12.80" text-anchor="end" textLength="7.95" lengthAdjust="spacingAndGlyphs" style="white-space:pre">0</text>
<text x="69.00" y="512.10" font-size="12.80" text-anchor="end" textLength="32.34" lengthAdjust="spacingAndGlyphs" style="white-space:pre">-0.05</text>
<text x="69.00" y="620.10" font-size="12.80" text-anchor="end" textLength="24.39" lengthAdjust="spacingAndGlyphs" style="white-space:pre">-0.1</text>
<text x="69.00" y="728.10" font-size="12.80" text-anchor="end" textLength="32.34" lengthAdjust="spacingAndGlyphs" style="white-space:pre">-0.15</text>
<text x="69.00" y="836.10" font-size="12.80" text-anchor="end" textLength="24.39" lengthAdjust="spacingAndGlyphs" style="white-space:pre">-0.2</text>
<text x="77.50" y="853.20" font-size="12.80" text-anchor="middle" textLength="32.34" lengthAdjust="spacingAndGlyphs" style="white-space:pre">-0.15</text>
<text x="209.50" y="853.20" font-size="12.80" text-anchor="middle" textLength="24.39" lengthAdjust="spacingAndGlyphs" style="white-space:pre">-0.1</text>
<text x="341.50" y="853.20" font-size="12.80" text-anchor="middle" textLength="32.34" lengthAdjust="spacingAndGlyphs" style="white-space:pre">-0.05</text>
<text x="474.60" y="853.20" font-size="12.80" text-anchor="middle" textLength="7.95" lengthAdjust="spacingAndGlyphs" style="white-space:pre">0</text>
<text x="606.60" y="853.20" font-size="12.80" text-anchor="middle" textLength="27.83" lengthAdjust="spacingAndGlyphs" style="white-space:pre">0.05</text>
<text x="738.60" y="853.20" font-size="12.80" text-anchor="middle" textLength="19.88" lengthAdjust="spacingAndGlyphs" style="white-space:pre">0.1</text>
<text x="870.60" y="853.20" font-size="12.80" text-anchor="middle" textLength="27.83" lengthAdjust="spacingAndGlyphs" style="white-space:pre">0.15</text>
<text x="1002.60" y="853.20" font-size="12.80" text-anchor="middle" textLength="19.88" lengthAdjust="spacingAndGlyphs" style="white-space:pre">0.2</text>
<text x="538.60" y="877.90" font-size="12.80" text-anchor="middle" textLength="7.40" lengthAdjust="spacingAndGlyphs" style="white-space:pre">x</text>
<g transform="translate(17.3 453.3) rotate(-90)"><text x="0.00" y="0.00" font-size="12.80" text-anchor="middle" textLength="7.40" lengthAdjust="spacingAndGlyphs" style="white-space:pre">y</text></g>
<text x="293.00" y="95.80" font-size="12.80" text-anchor="end" textLength="171.58" lengthAdjust="spacingAndGlyphs" style="white-space:pre">&quot;P12_90_o1.dat&quot;  using 1:2</text>
<text x="293.00" y="112.80" font-size="12.80" text-anchor="end" textLength="171.58" lengthAdjust="spacingAndGlyphs" style="white-space:pre">&quot;P12_90_o1.dat&quot;  using 1:2</text>
<text x="293.00" y="129.80" font-size="12.80" text-anchor="end" textLength="171.58" lengthAdjust="spacingAndGlyphs" style="white-space:pre">&quot;P12_90_o2.dat&quot;  using 1:2</text>
<text x="293.00" y="146.80" font-size="12.80" text-anchor="end" textLength="171.58" lengthAdjust="spacingAndGlyphs" style="white-space:pre">&quot;P12_90_o2.dat&quot;  using 1:2</text>
<text x="5.60" y="902.70" font-size="12.80" text-anchor="start" textLength="160.11" lengthAdjust="spacingAndGlyphs" style="white-space:pre">-0.00740249, -0.0206650</text>
</svg>
</body></html>
